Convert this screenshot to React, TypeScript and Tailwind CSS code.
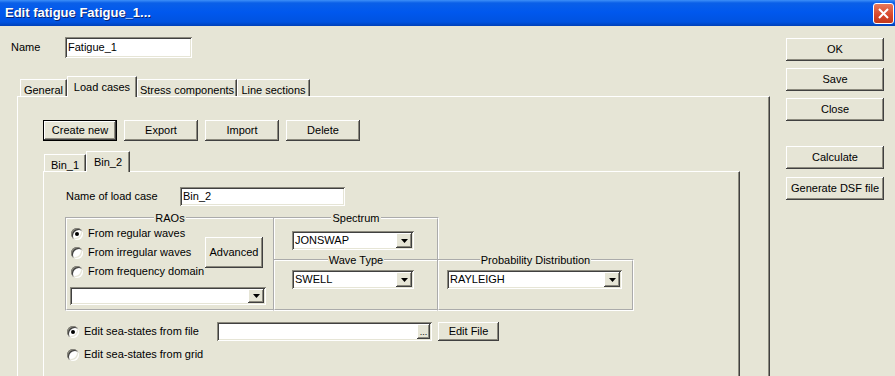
import React from 'react';

const raised =
  'bg-[#e6e5d6] shadow-[inset_-1px_-1px_#404040,inset_1px_1px_#ffffff,inset_-2px_-2px_#8c8a7e]';
const sunken =
  'bg-white shadow-[inset_1px_1px_#8c8a7e,inset_-1px_-1px_#ffffff,inset_2px_2px_#404040,inset_-2px_-2px_#e6e5d6]';

interface ButtonProps {
  label: string;
  className?: string;
  isDefault?: boolean;
}

function Button({ label, className = '', isDefault }: ButtonProps) {
  return (
    <div className={`${className} ${isDefault ? 'border border-black' : ''} flex`}>
      <div className={`${raised} flex-1 flex items-center justify-center pb-[1px] whitespace-nowrap`}>
        {label}
      </div>
    </div>
  );
}

function Arrow() {
  return (
    <span className={`${raised} w-[16px] flex items-center justify-center`}>
      <svg width="7" height="4" viewBox="0 0 7 4">
        <path d="M0 0h7L3.5 4z" fill="#000" />
      </svg>
    </span>
  );
}

function Combo({ value, className = '' }: { value: string; className?: string }) {
  return (
    <div className={`${sunken} ${className} flex p-[2px]`}>
      <span className="flex-1 pl-[1px] flex items-center whitespace-nowrap overflow-hidden">{value}</span>
      <Arrow />
    </div>
  );
}

function Radio({ checked }: { checked?: boolean }) {
  return (
    <span className="w-[12px] h-[12px] rounded-full bg-white flex items-center justify-center shrink-0 shadow-[inset_1px_1px_#8c8a7e,inset_-1px_-1px_#ffffff,inset_2px_2px_#404040,inset_-2px_-2px_#e6e5d6]">
      {checked && <span className="w-[4px] h-[4px] rounded-full bg-black" />}
    </span>
  );
}

function Group({ title, className = '', children }: { title: string; className?: string; children?: React.ReactNode }) {
  return (
    <fieldset className={`border-2 [border-style:groove] border-white min-w-0 ${className}`}>
      <legend className="mx-auto px-[1px] h-[12px] leading-[12px]">{title}</legend>
      {children}
    </fieldset>
  );
}

function Tab({ label, active, className = '' }: { label: string; active?: boolean; className?: string }) {
  return (
    <div
      className={`${className} flex justify-center border-t border-l border-white border-r border-r-[#404040] shadow-[inset_-1px_0_#8c8a7e] bg-[#e6e5d6] ${
        active ? 'h-[21px] -mb-[1px] relative z-10 pt-[2px]' : 'h-[17px] pt-[2px]'
      }`}
    >
      {label}
    </div>
  );
}

export default function App() {
  return (
    <div className="w-[895px] h-[376px] overflow-hidden bg-[#e6e5d6] flex flex-col font-['Liberation_Sans',Arial,sans-serif] text-[11px] text-black">
      <div className="h-[26px] shrink-0 flex items-center justify-between pl-[5px] pr-[1px] bg-[linear-gradient(to_bottom,#3d8ff8_0px,#0a5fe8_3px,#0058ee_12px,#0053e0_22px,#0040b8_26px)]">
        <span className="text-white font-bold text-[13px] [text-shadow:1px_1px_#0a2470]">Edit fatigue Fatigue_1...</span>
        <span className="w-[21px] h-[21px] rounded-[3px] border border-white bg-[linear-gradient(to_bottom,#e8795a,#d6462a_60%,#c2391c)] flex items-center justify-center">
          <svg width="11" height="11" viewBox="0 0 11 11">
            <path d="M1 1L10 10M10 1L1 10" stroke="#fff" strokeWidth="2" />
          </svg>
        </span>
      </div>

      <div className="flex flex-1 min-h-0">
        <div className="w-[786px] flex flex-col">
          <div className="mt-[11px] ml-[11px] flex items-center h-[21px]">
            <span className="w-[54px]">Name</span>
            <div className={`${sunken} w-[127px] h-[21px] flex items-center pl-[3px]`}>Fatigue_1</div>
          </div>

          <div className="mt-[18px] ml-[17px] w-[753px] flex flex-col flex-1 min-h-0">
            <div className="h-[20px] flex items-end pl-[3px]">
              <Tab label="General" className="w-[47px]" />
              <Tab label="Load cases" active className="w-[70px]" />
              <Tab label="Stress components" className="w-[100px]" />
              <Tab label="Line sections" className="w-[73px]" />
            </div>

            <div className="flex-1 border-t border-l border-white border-r border-r-[#404040] shadow-[inset_-1px_0_#8c8a7e] pt-[23px] pl-[25px] flex flex-col">
              <div className="flex gap-[7px]">
                <Button label="Create new" isDefault className="w-[74px] h-[21px]" />
                <Button label="Export" className="w-[74px] h-[21px]" />
                <Button label="Import" className="w-[74px] h-[21px]" />
                <Button label="Delete" className="w-[74px] h-[21px]" />
              </div>

              <div className="mt-[10px] h-[20px] flex items-end pl-[1px]">
                <Tab label="Bin_1" className="w-[42px]" />
                <Tab label="Bin_2" active className="w-[44px]" />
              </div>

              <div className="w-[697px] flex-1 border-t border-l border-white border-r border-r-[#404040] shadow-[inset_-1px_0_#8c8a7e] pl-[22px] flex flex-col">
                <div className="mt-[15px] flex items-center h-[19px]">
                  <span className="w-[114px]">Name of load case</span>
                  <div className={`${sunken} w-[165px] h-[19px] flex items-center pl-[3px]`}>Bin_2</div>
                </div>

                <div className="mt-[6px] -ml-[1px] flex">
                  <Group title="RAOs" className="w-[210px] h-[99px]">
                    <div className="flex pl-[4px]">
                      <div className="w-[134px] flex flex-col">
                        <div className="h-[19px] flex items-center gap-[5px]">
                          <Radio checked />
                          <span>From regular waves</span>
                        </div>
                        <div className="h-[19px] flex items-center gap-[5px]">
                          <Radio />
                          <span>From irregular waves</span>
                        </div>
                        <div className="h-[19px] flex items-center gap-[5px]">
                          <Radio />
                          <span>From frequency domain</span>
                        </div>
                      </div>
                      <Button label="Advanced" className="mt-[13px] w-[58px] h-[31px]" />
                    </div>
                    <Combo value="" className="ml-[3px] mt-[6px] w-[196px] h-[18px]" />
                  </Group>

                  <div className="-ml-[2px] flex flex-col">
                    <Group title="Spectrum" className="w-[166px] h-[48px] border-b-0">
                      <Combo value="JONSWAP" className="ml-[17px] mt-[7px] w-[122px] h-[19px]" />
                    </Group>
                    <div className="flex -mt-[6px]">
                      <Group title="Wave Type" className="w-[166px] h-[57px]">
                        <Combo value="SWELL" className="ml-[17px] mt-[4px] w-[122px] h-[19px]" />
                      </Group>
                      <Group title="Probability Distribution" className="w-[197px] h-[57px] -ml-[2px]">
                        <Combo value="RAYLEIGH" className="ml-[8px] mt-[4px] w-[175px] h-[19px]" />
                      </Group>
                    </div>
                  </div>
                </div>

                <div className="mt-[11px] h-[19px] flex items-center">
                  <span className="ml-[1px]">
                    <Radio checked />
                  </span>
                  <span className="ml-[5px] w-[133px]">Edit sea-states from file</span>
                  <div className={`${sunken} w-[215px] h-[19px] flex justify-end p-[2px]`}>
                    <span className={`${raised} w-[13px] flex items-end justify-center text-[9px] leading-[12px] pb-[1px]`}>...</span>
                  </div>
                  <Button label="Edit File" className="ml-[6px] w-[61px] h-[19px]" />
                </div>
                <div className="mt-[4px] h-[19px] flex items-center">
                  <span className="ml-[1px]">
                    <Radio />
                  </span>
                  <span className="ml-[5px]">Edit sea-states from grid</span>
                </div>
              </div>
            </div>
          </div>
        </div>

        <div className="w-[98px] pt-[12px] flex flex-col">
          <Button label="OK" className="h-[23px]" />
          <Button label="Save" className="h-[23px] mt-[7px]" />
          <Button label="Close" className="h-[23px] mt-[7px]" />
          <Button label="Calculate" className="h-[23px] mt-[25px]" />
          <Button label="Generate DSF file" className="h-[23px] mt-[8px]" />
        </div>
      </div>
    </div>
  );
}
